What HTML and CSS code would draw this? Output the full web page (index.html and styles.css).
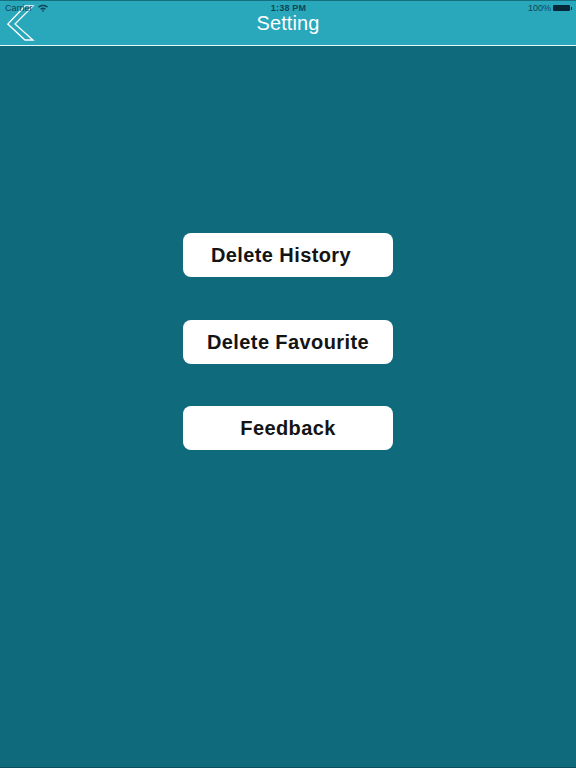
FILE: index.html
```html
<!DOCTYPE html>
<html lang="en">
<head>
    <meta charset="UTF-8">
    <meta name="viewport" content="width=device-width, initial-scale=1.0">
    <title>Setting</title>
    <link rel="stylesheet" href="styles.css">
</head>
<body>
    <div class="header">
        <svg class="back" width="28" height="36" viewBox="0 0 28 36">
            <path d="M18 1L0.8 19L18 35H26L8 19L26 1Z"/>
        </svg>
        <div class="status-bar">
            <div class="status-left">
                <span>Carrier</span>
                <svg class="wifi" width="10" height="8" viewBox="0 0 10 8">
                    <path d="M0 2.6C2.8 0 7.2 0 10 2.6L8.9 3.8C6.7 1.8 3.3 1.8 1.1 3.8Z"/>
                    <path d="M2.1 4.7C3.8 3.2 6.2 3.2 7.9 4.7L6.8 5.8C5.7 4.9 4.3 4.9 3.2 5.8Z"/>
                    <path d="M5 8L3.9 6.7C4.6 6.2 5.4 6.2 6.1 6.7Z"/>
                </svg>
            </div>
            <div class="status-time">1:38 PM</div>
            <div class="status-right">
                <span>100%</span>
                <div class="battery"></div>
            </div>
        </div>
        <h1>Setting</h1>
    </div>

    <div class="content">
        <button class="history">Delete History</button>
        <button>Delete Favourite</button>
        <button>Feedback</button>
    </div>
</body>
</html>
```

FILE: styles.css
```css
body {
    font-family: "Liberation Sans", Arial, sans-serif;
    background-color: #0f6a7b;
    margin: 0;
    height: 768px;
    overflow: hidden;
    display: flex;
    flex-direction: column;
    border-bottom: 1px solid #0a4f5e;
    box-sizing: border-box;
}

.header {
    position: relative;
    height: 46px;
    box-sizing: border-box;
    background-color: #29a7bb;
    border-top: 1px solid #14707f;
    border-bottom: 1px solid #e4f6f8;
    color: #fff;
}

.status-bar {
    position: relative;
    display: flex;
    justify-content: space-between;
    align-items: center;
    height: 13px;
    padding: 0 4px 0 5px;
    font-size: 9px;
    line-height: 10px;
    color: #0f4656;
}

.status-left, .status-right {
    display: flex;
    align-items: center;
    gap: 5px;
    width: 80px;
}

.status-right {
    justify-content: flex-end;
    gap: 2px;
}

.wifi {
    fill: #0f4656;
}

.status-time {
    font-weight: bold;
    letter-spacing: 0.2px;
}

.battery {
    position: relative;
    width: 17px;
    height: 6px;
    background-color: #08283a;
    border-radius: 1px;
    margin-right: 2px;
}

.battery::after {
    content: "";
    position: absolute;
    right: -2px;
    top: 2px;
    width: 1px;
    height: 3px;
    background-color: #08283a;
}

h1 {
    margin: 0;
    text-align: center;
    font-size: 20px;
    letter-spacing: 0.1px;
    line-height: 18px;
    font-weight: normal;
}

.back {
    position: absolute;
    left: 7px;
    top: 4px;
    fill: none;
    stroke: #fff;
    stroke-width: 1.3;
}

.content {
    display: flex;
    flex-direction: column;
    align-items: center;
    padding-top: 187px;
}

button {
    width: 210px;
    height: 44px;
    margin-bottom: 43px;
    background-color: #fff;
    border: none;
    border-radius: 8px;
    font-family: inherit;
    font-size: 20px;
    letter-spacing: 0.4px;
    font-weight: bold;
    color: #141414;
    padding: 0;
}

button:nth-child(2) {
    margin-bottom: 42px;
}

.history {
    padding-right: 14px;
}
```
